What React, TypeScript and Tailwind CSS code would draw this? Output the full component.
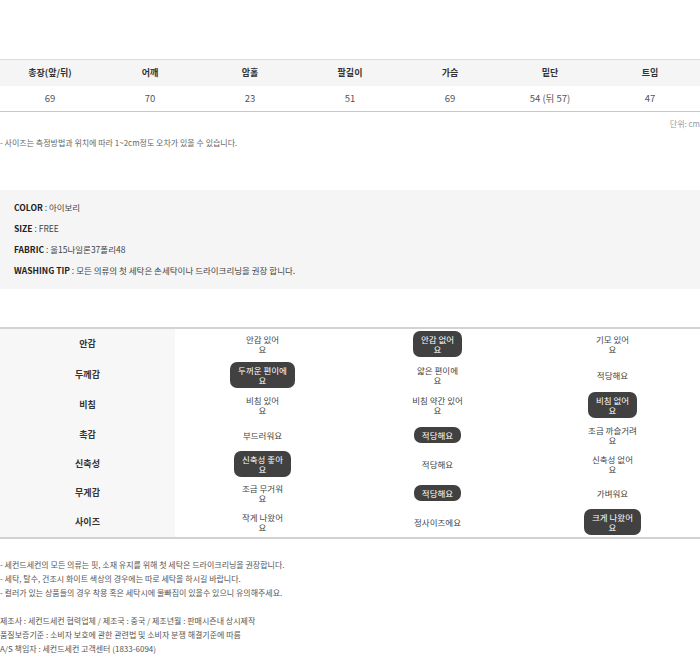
const font = { fontFamily: '"Noto Sans CJK KR", "Noto Sans", sans-serif' };

const sizes = [
  { label: "총장(앞/뒤)", value: "69" },
  { label: "어깨", value: "70" },
  { label: "암홀", value: "23" },
  { label: "팔길이", value: "51" },
  { label: "가슴", value: "69" },
  { label: "밑단", value: "54 (뒤 57)" },
  { label: "트임", value: "47" },
];

const details = [
  { label: "COLOR", value: "아이보리" },
  { label: "SIZE", value: "FREE" },
  { label: "FABRIC", value: "울15나일론37폴리48" },
  { label: "WASHING TIP", value: "모든 의류의 첫 세탁은 손세탁이나 드라이크리닝을 권장 합니다." },
];

const features = [
  { label: "안감", opts: ["안감 있어\n요", "안감 없어\n요", "기모 있어\n요"], on: 1, h: "h-[30px]" },
  { label: "두께감", opts: ["두꺼운 편이에\n요", "얇은 편이에\n요", "적당해요"], on: 0, h: "h-[31px]" },
  { label: "비침", opts: ["비침 있어\n요", "비침 약간 있어\n요", "비침 없어\n요"], on: 2, h: "h-[30px]" },
  { label: "촉감", opts: ["부드러워요", "적당해요", "조금 까슬거려\n요"], on: 1, h: "h-[29px]" },
  { label: "신축성", opts: ["신축성 좋아\n요", "적당해요", "신축성 없어\n요"], on: 0, h: "h-[29px]" },
  { label: "무게감", opts: ["조금 무거워\n요", "적당해요", "가벼워요"], on: 1, h: "h-[29px]" },
  { label: "사이즈", opts: ["작게 나왔어\n요", "정사이즈에요", "크게 나왔어\n요"], on: 2, h: "h-[30px]" },
];

const notes = [
  "- 세컨드세컨의 모든 의류는 핏, 소재 유지를 위해 첫 세탁은 드라이크리닝을 권장합니다.",
  "- 세탁, 탈수, 건조시 화이트 색상의 경우에는 따로 세탁을 하시길 바랍니다.",
  "- 컬러가 있는 상품들의 경우 착용 혹은 세탁시에 물빠짐이 있을수 있으니 유의해주세요.",
];

const info = [
  "제조사 : 세컨드세컨 협력업체 / 제조국 : 중국 / 제조년월 : 판매시즌내 상시제작",
  "품질보증기준 : 소비자 보호에 관한 관련법 및 소비자 분쟁 해결기준에 따름",
  "A/S 책임자 : 세컨드세컨 고객센터 (1833-6094)",
];

export default function App() {
  return (
    <div className="w-[700px] bg-white pt-[59px] text-[#555]" style={font}>
      {/* size table */}
      <div className="border-t border-b border-t-[#dcdcdc] border-b-[#c8c8c8]">
        <div className="grid h-[26px] grid-cols-7 items-center bg-[#f5f5f5] text-[9px] font-bold text-[#333]">
          {sizes.map((s) => (
            <div key={s.label} className="text-center">{s.label}</div>
          ))}
        </div>
        <div className="grid h-[25px] grid-cols-7 items-center text-[9.5px]">
          {sizes.map((s) => (
            <div key={s.label} className="text-center">{s.value}</div>
          ))}
        </div>
      </div>
      <p className="mt-[6px] text-right text-[8px] leading-[12px] text-[#999]">단위: cm</p>
      <p className="mt-[7px] text-[8px] leading-[12px] text-[#666]">
        - 사이즈는 측정방법과 위치에 따라 1~2cm정도 오차가 있을 수 있습니다.
      </p>

      {/* detail box */}
      <div className="mt-[41px] bg-[#f5f5f5] px-[14px] pb-[8px] pt-[7px] text-[8.5px] text-[#444]">
        {details.map((d) => (
          <div key={d.label} className="flex h-[21px] items-center">
            <span className="font-bold text-[#222]">{d.label}</span>
            <span className="whitespace-pre"> : {d.value}</span>
          </div>
        ))}
      </div>

      {/* feature table */}
      <div className="mt-[38px] border-t-2 border-b-2 border-[#d2d2d2]">
        {features.map((f) => (
          <div key={f.label} className={`grid grid-cols-4 ${f.h}`}>
            <div className="flex items-center justify-center bg-[#f7f7f7] text-[9px] font-bold text-[#333]">
              {f.label}
            </div>
            {f.opts.map((o, i) => (
              <div key={o} className="flex items-center justify-center">
                <span
                  className={
                    i === f.on
                      ? "whitespace-pre-line rounded-[7px] bg-[#414141] px-[8px] py-[3px] text-center text-[8.5px] leading-[10px] text-white"
                      : "whitespace-pre-line px-[8px] text-center text-[8.5px] leading-[10px] text-[#444]"
                  }
                >
                  {o}
                </span>
              </div>
            ))}
          </div>
        ))}
      </div>

      {/* notes */}
      <div className="mt-[19px] text-[8px] leading-[14px] text-[#555]">
        {notes.map((n) => (
          <p key={n}>{n}</p>
        ))}
        <div className="mt-[14px]">
          {info.map((n) => (
            <p key={n}>{n}</p>
          ))}
        </div>
      </div>
    </div>
  );
}
